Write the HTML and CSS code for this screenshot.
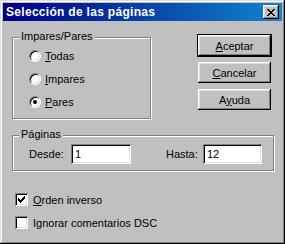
FILE: index.html
```html
<!DOCTYPE html>
<html lang="es">

<head>
    <meta charset="UTF-8">
    <title>Selección de las páginas</title>
    <link rel="stylesheet" href="styles.css">
</head>

<body>
    <div class="window">
        <!-- Title bar -->
        <div class="titlebar">
            <span class="title">Selección de las páginas</span>
            <span class="close-btn">
                <svg width="8" height="7" viewBox="0 0 8 7" shape-rendering="crispEdges">
                    <rect x="0" y="0" width="2" height="1" />
                    <rect x="6" y="0" width="2" height="1" />
                    <rect x="1" y="1" width="2" height="1" />
                    <rect x="5" y="1" width="2" height="1" />
                    <rect x="2" y="2" width="4" height="1" />
                    <rect x="3" y="3" width="2" height="1" />
                    <rect x="2" y="4" width="4" height="1" />
                    <rect x="1" y="5" width="2" height="1" />
                    <rect x="5" y="5" width="2" height="1" />
                    <rect x="0" y="6" width="2" height="1" />
                    <rect x="6" y="6" width="2" height="1" />
                </svg>
            </span>
        </div>

        <div class="dialog-body">
            <div class="top-row">
                <div class="group group-parity">
                    <span class="group-label">Impares/Pares</span>
                    <div class="radio-row">
                        <span class="radio"></span>
                        <span><u>T</u>odas</span>
                    </div>
                    <div class="radio-row">
                        <span class="radio"></span>
                        <span><u>I</u>mpares</span>
                    </div>
                    <div class="radio-row">
                        <span class="radio checked"></span>
                        <span><u>P</u>ares</span>
                    </div>
                </div>

                <div class="buttons">
                    <div class="btn default"><span><u>A</u>ceptar</span></div>
                    <div class="btn"><span><u>C</u>ancelar</span></div>
                    <div class="btn"><span>A<u>y</u>uda</span></div>
                </div>
            </div>

            <div class="group group-pages">
                <span class="group-label">Páginas</span>
                <span class="field-label from-label">Desde:</span>
                <span class="input from-input">1</span>
                <span class="field-label to-label">Hasta:</span>
                <span class="input to-input">12</span>
            </div>

            <div class="check-row">
                <span class="checkbox">
                    <svg width="7" height="7" viewBox="0 0 7 7" shape-rendering="crispEdges">
                        <rect x="0" y="2" width="1" height="3" />
                        <rect x="1" y="3" width="1" height="3" />
                        <rect x="2" y="4" width="1" height="3" />
                        <rect x="3" y="3" width="1" height="3" />
                        <rect x="4" y="2" width="1" height="3" />
                        <rect x="5" y="1" width="1" height="3" />
                        <rect x="6" y="0" width="1" height="3" />
                    </svg>
                </span>
                <span><u>O</u>rden inverso</span>
            </div>
            <div class="check-row">
                <span class="checkbox"></span>
                <span>Ignorar comentarios DSC</span>
            </div>
        </div>
    </div>
</body>

</html>
```

FILE: styles.css
```css
html,
body {
    margin: 0;
    padding: 0;
}

body {
    font-family: 'Liberation Sans', Arial, sans-serif;
    font-size: 11px;
    color: #000;
    background: #c0c0c0;
}

u {
    text-decoration: underline;
    text-underline-offset: 1px;
}

/* Window frame, classic raised bevel */
.window {
    width: 285px;
    height: 244px;
    box-sizing: border-box;
    padding: 3px;
    background: #c0c0c0;
    box-shadow: inset -1px -1px 0 #000,
        inset 1px 1px 0 #dfdfdf,
        inset -2px -2px 0 #808080,
        inset 2px 2px 0 #fff;
}

.titlebar {
    height: 18px;
    display: flex;
    align-items: center;
    justify-content: space-between;
    padding: 0 3px 0 3px;
    background: linear-gradient(to right, #000080, #1084d0);
}

.title {
    color: #fff;
    font-weight: bold;
    font-size: 12px;
    letter-spacing: 0.3px;
}

.close-btn {
    width: 16px;
    height: 14px;
    box-sizing: border-box;
    display: flex;
    align-items: center;
    justify-content: center;
    background: #c0c0c0;
    box-shadow: inset -1px -1px 0 #000,
        inset 1px 1px 0 #fff,
        inset -2px -2px 0 #808080,
        inset 2px 2px 0 #dfdfdf;
}

.close-btn svg {
    margin-left: -1px;
    fill: #000;
}

.dialog-body {
    padding: 13px 9px 0 9px;
}

.top-row {
    display: flex;
    align-items: flex-start;
}

/* Etched group box */
.group {
    position: relative;
    box-sizing: border-box;
    border: 1px solid #808080;
    box-shadow: inset 1px 1px 0 #fff, 1px 1px 0 #fff;
}

.group-label {
    position: absolute;
    top: -8px;
    left: 6px;
    padding: 0 2px;
    background: #c0c0c0;
    line-height: 13px;
}

.group-parity {
    width: 139px;
    height: 82px;
    margin-top: 3px;
    padding: 12px 0 0 16px;
}

.radio-row {
    display: flex;
    align-items: center;
    gap: 4px;
    height: 12px;
    margin-bottom: 11px;
}

.radio {
    position: relative;
    width: 12px;
    height: 12px;
    box-sizing: border-box;
    border-radius: 50%;
    border: 1px solid;
    border-color: #808080 #fff #fff #808080;
    background: #fff;
    box-shadow: inset 1px 1px 0 #000, inset -1px -1px 0 #dfdfdf;
}

.radio.checked::after {
    content: '';
    position: absolute;
    top: 3px;
    left: 3px;
    width: 4px;
    height: 4px;
    border-radius: 50%;
    background: #000;
}

.buttons {
    display: flex;
    flex-direction: column;
    gap: 6px;
    margin-left: 47px;
    padding-top: 1px;
}

.btn {
    width: 73px;
    height: 21px;
    box-sizing: border-box;
    display: flex;
    align-items: center;
    justify-content: center;
    background: #c0c0c0;
    box-shadow: inset -1px -1px 0 #000,
        inset 1px 1px 0 #fff,
        inset -2px -2px 0 #808080,
        inset 2px 2px 0 #dfdfdf;
}

.btn.default {
    outline: 1px solid #000;
}

.group-pages {
    width: 262px;
    height: 36px;
    margin-top: 16px;
    padding: 8px 0 0 16px;
    display: flex;
    align-items: flex-start;
}

.field-label {
    height: 20px;
    line-height: 20px;
}

.from-label {
    width: 42px;
}

.to-label {
    width: 37px;
    margin-left: 35px;
}

.input {
    height: 20px;
    box-sizing: border-box;
    padding-left: 4px;
    line-height: 20px;
    background: #fff;
    box-shadow: inset 1px 1px 0 #808080,
        inset -1px -1px 0 #fff,
        inset 2px 2px 0 #000,
        inset -2px -2px 0 #dfdfdf;
}

.from-input {
    width: 60px;
}

.to-input {
    width: 59px;
}

.check-row {
    display: flex;
    align-items: center;
    gap: 5px;
    height: 13px;
    margin: 22px 0 0 3px;
}

.check-row + .check-row {
    margin-top: 10px;
}

.checkbox {
    width: 13px;
    height: 13px;
    box-sizing: border-box;
    display: flex;
    align-items: center;
    justify-content: center;
    background: #fff;
    box-shadow: inset 1px 1px 0 #808080,
        inset -1px -1px 0 #fff,
        inset 2px 2px 0 #000,
        inset -2px -2px 0 #dfdfdf;
}

.checkbox svg {
    fill: #000;
}
```
